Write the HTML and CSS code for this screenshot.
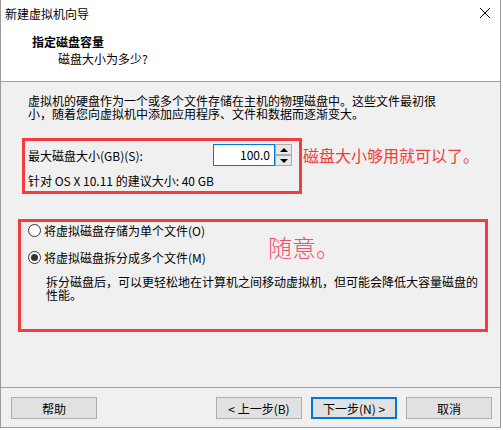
FILE: index.html
```html
<!DOCTYPE html>
<html lang="zh-CN">
<head>
    <meta charset="UTF-8">
    <meta name="viewport" content="width=device-width, initial-scale=1.0">
    <title>新建虚拟机向导</title>
    <link rel="stylesheet" href="styles.css">
</head>
<body>
    <div class="window">
        <div class="titlebar">
            <span>新建虚拟机向导</span>
            <svg class="close" width="12" height="12" viewBox="0 0 12 12">
                <path d="M1 1 L11 11 M11 1 L1 11" stroke="#000" stroke-width="1" fill="none"/>
            </svg>
        </div>
        <div class="header">
            <div class="header-title">指定磁盘容量</div>
            <div class="header-sub">磁盘大小为多少?</div>
        </div>
        <div class="content">
            <div class="intro">
                <div class="line">虚拟机的硬盘作为一个或多个文件存储在主机的物理磁盘中。这些文件最初很</div>
                <div class="line">小，随着您向虚拟机中添加应用程序、文件和数据而逐渐变大。</div>
            </div>
            <div class="size-row">
                <div class="mark size-box">
                    <div class="size-line">
                        <span>最大磁盘大小(GB)(S):</span>
                        <div class="spinner">
                            <div class="spin-input">100.0</div>
                            <div class="spin-buttons">
                                <div class="spin-btn"><span class="arrow-up"></span></div>
                                <div class="spin-btn"><span class="arrow-down"></span></div>
                            </div>
                        </div>
                    </div>
                    <div class="hint">针对 OS X 10.11 的建议大小: 40 GB</div>
                </div>
                <span class="note">磁盘大小够用就可以了。</span>
            </div>
            <div class="mark split-box">
                <div class="radio"><span class="dot"></span>将虚拟磁盘存储为单个文件(O)</div>
                <div class="radio second"><span class="dot checked"></span>将虚拟磁盘拆分成多个文件(M)</div>
                <div class="split-desc">
                    <div class="line">拆分磁盘后，可以更轻松地在计算机之间移动虚拟机，但可能会降低大容量磁盘的</div>
                    <div class="line">性能。</div>
                </div>
                <span class="note-big">随意。</span>
            </div>
        </div>
        <div class="footer">
            <button class="help">帮助</button>
            <button>&lt; 上一步(B)</button>
            <button class="primary">下一步(N) &gt;</button>
            <button>取消</button>
        </div>
    </div>
</body>
</html>
```

FILE: styles.css
```css
body {
    margin: 0;
    background-color: #ffffff;
    font-family: "Noto Sans CJK SC", "Noto Sans", sans-serif;
    font-size: 12px;
    color: #000;
}
.window {
    width: 501px;
    height: 428px;
    box-sizing: border-box;
    border: 1px solid #9a9a9a;
    border-top: none;
    background-color: #f0f0f0;
    display: flex;
    flex-direction: column;
}
.titlebar {
    height: 28px;
    background-color: #fff;
    display: flex;
    align-items: center;
    justify-content: space-between;
    padding: 0 9px 0 4px;
    line-height: 16px;
}
.close {
    margin-top: -2px;
}
.header {
    background-color: #fff;
    border-bottom: 1px solid #a0a0a0;
    padding: 6px 0 0 31px;
    box-sizing: border-box;
    height: 54px;
    line-height: 16px;
}
.header-title {
    font-weight: bold;
}
.header-sub {
    margin: 1px 0 0 26px;
}
.content {
    flex: 1;
    padding: 12px 0 0 17px;
}
.intro {
    margin-left: 10px;
}
.line {
    height: 13px;
    line-height: 13px;
    white-space: nowrap;
}
.size-row {
    display: flex;
    align-items: flex-start;
    margin: 18px 0 0 4px;
}
.mark {
    border: 3px solid #f43c3c;
    box-sizing: border-box;
}
.size-box {
    width: 280px;
    height: 56px;
    padding: 3px 7px 0 3px;
}
.size-line {
    display: flex;
    justify-content: space-between;
    align-items: center;
    height: 22px;
}
.spinner {
    display: flex;
    height: 22px;
}
.spin-input {
    width: 62px;
    box-sizing: border-box;
    border: 1px solid #0078d7;
    background-color: #fff;
    text-align: right;
    padding-right: 4px;
    line-height: 20px;
}
.spin-buttons {
    display: flex;
    flex-direction: column;
    width: 17px;
}
.spin-btn {
    height: 11px;
    box-sizing: border-box;
    border: 1px solid #acacac;
    background-color: #e8e8e8;
    display: flex;
    align-items: center;
    justify-content: center;
}
.arrow-up {
    border-left: 4px solid transparent;
    border-right: 4px solid transparent;
    border-bottom: 4px solid #000;
}
.arrow-down {
    border-left: 4px solid transparent;
    border-right: 4px solid transparent;
    border-top: 4px solid #000;
}
.hint {
    margin-top: 8px;
    line-height: 13px;
}
.note {
    color: #f33a3a;
    font-size: 16px;
    line-height: 22px;
    margin: 6px 0 0 1px;
}
.split-box {
    width: 470px;
    height: 113px;
    margin-top: 25px;
    padding-left: 7px;
    position: relative;
}
.radio {
    display: flex;
    align-items: center;
    height: 16px;
}
.radio.second {
    margin-top: 11px;
}
.dot {
    width: 13px;
    height: 13px;
    box-sizing: border-box;
    border: 1px solid #333;
    border-radius: 50%;
    background-color: #fff;
    margin-right: 3px;
    display: flex;
    align-items: center;
    justify-content: center;
}
.dot.checked::after {
    content: "";
    width: 7px;
    height: 7px;
    border-radius: 50%;
    background-color: #333;
}
.split-desc {
    margin: 10px 0 0 18px;
}
.note-big {
    position: absolute;
    left: 247px;
    top: 9px;
    color: #f0506a;
    font-size: 24px;
    font-weight: 300;
    line-height: 32px;
}
.footer {
    border-top: 1px solid #a0a0a0;
    padding: 9px 8px 0 10px;
    height: 40px;
    box-sizing: border-box;
    display: flex;
    gap: 9px;
}
button {
    width: 86px;
    height: 22px;
    box-sizing: border-box;
    border: 1px solid #adadad;
    background-color: #e1e1e1;
    font-family: inherit;
    font-size: 12px;
    color: #000;
    padding: 0;
}
.help {
    margin-right: auto;
}
.primary {
    border: 2px solid #0078d7;
}
```
